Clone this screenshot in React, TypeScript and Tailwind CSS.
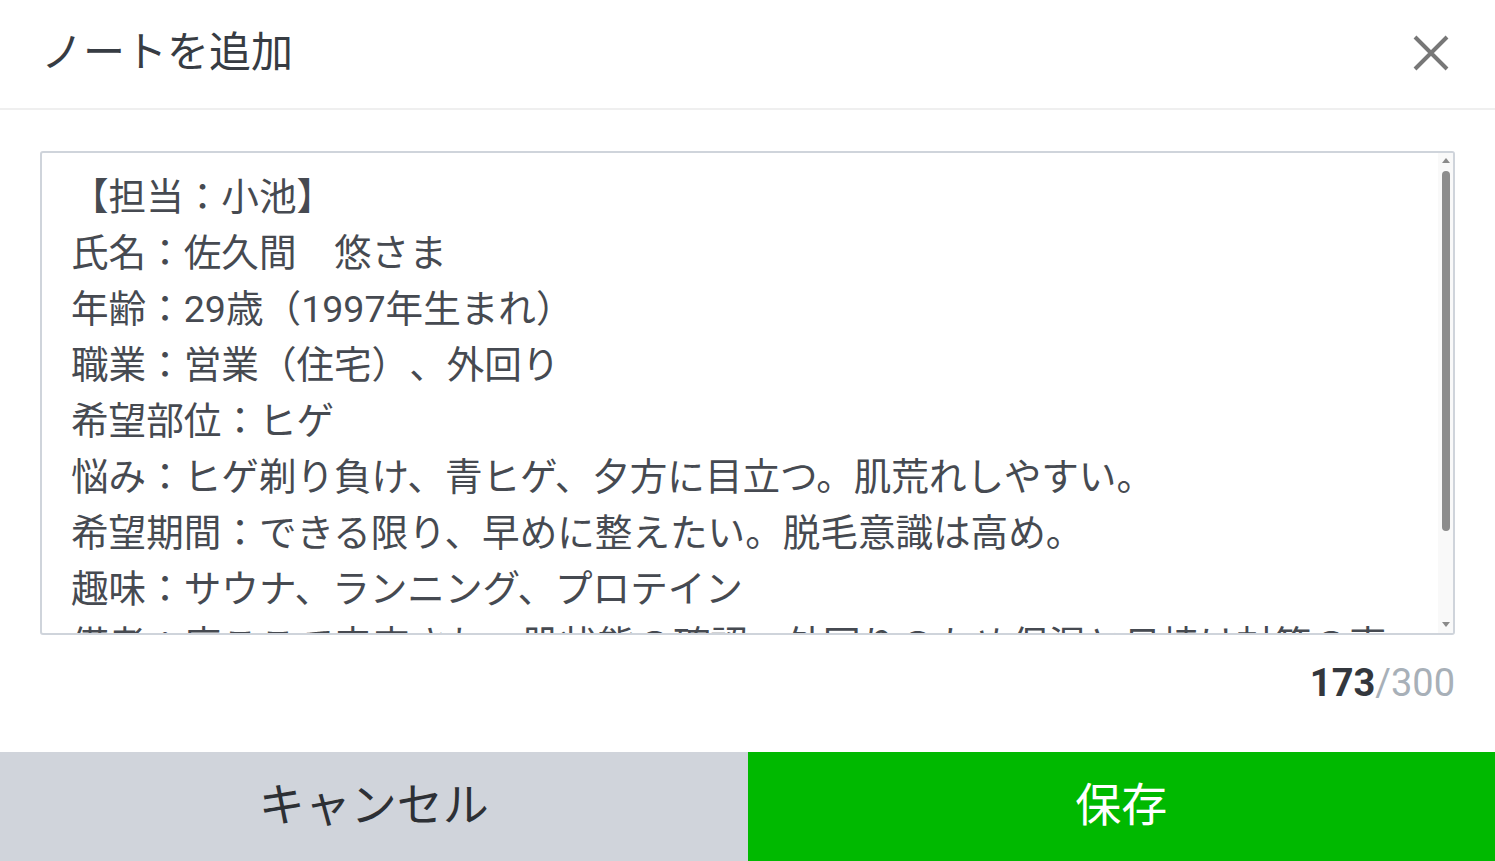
import React from "react";

const FONT = 'Roboto, "Noto Sans CJK JP", "Noto Sans", sans-serif';

const lines = [
  "【担当：小池】",
  "氏名：佐久間　悠さま",
  "年齢：29歳（1997年生まれ）",
  "職業：営業（住宅）、外回り",
  "希望部位：ヒゲ",
  "悩み：ヒゲ剃り負け、青ヒゲ、夕方に目立つ。肌荒れしやすい。",
  "希望期間：できる限り、早めに整えたい。脱毛意識は高め。",
  "趣味：サウナ、ランニング、プロテイン",
  "備考：度ここで来店され、肌状態の確認。外回りのため保湿と日焼け対策の声",
  "がけを行う。",
];

export default function App() {
  return (
    <div
      className="w-full h-[861px] bg-white flex flex-col overflow-hidden [text-spacing-trim:space-all]"
      style={{ fontFamily: FONT }}
    >
      <header className="h-[110px] shrink-0 border-b-2 border-[#efefef] flex items-center justify-between pl-[41px] pr-[46px] pb-[2px]">
        <h1 className="text-[42px] leading-none text-[#373c43]">ノートを追加</h1>
        <svg width="36" height="36" viewBox="0 0 36 36" className="text-[#777777]">
          <path d="M2 2 L34 34 M34 2 L2 34" stroke="currentColor" strokeWidth="4" fill="none" />
        </svg>
      </header>

      <div className="flex-1 flex flex-col px-[40px] pt-[41px]">
        <div className="h-[484px] border-2 border-[#cfd4db] rounded-[3px] flex overflow-hidden">
          <div className="flex-1 overflow-hidden pl-[29px] pt-[16px] text-[37.6px] leading-[56px] text-[#464a51] whitespace-nowrap">
            {lines.map((l, i) => (
              <div key={i}>{l}</div>
            ))}
          </div>
          <div className="w-[15px] shrink-0 bg-[#f9f9f9] flex flex-col items-center pt-[5px] pb-[6px]">
            <div className="w-0 h-0 border-l-[4px] border-r-[4px] border-b-[5px] border-l-transparent border-r-transparent border-b-[#8a8a8a]" />
            <div className="mt-[8px] h-[360px] w-[8px] rounded-full bg-[#8c8c8c]" />
            <div className="flex-1" />
            <div className="w-0 h-0 border-l-[4px] border-r-[4px] border-t-[5px] border-l-transparent border-r-transparent border-t-[#8a8a8a]" />
          </div>
        </div>
        <div className="flex justify-end mt-[26px] text-[38px] leading-[44px]">
          <span className="font-bold text-[#33373d]">173</span>
          <span className="text-[#a8b0b8]">/300</span>
        </div>
      </div>

      <div className="h-[109px] shrink-0 flex">
        <button className="flex-1 bg-[#d0d4db] text-[#2d3035] text-[46px] flex items-center justify-center pb-[2px]">
          キャンセル
        </button>
        <button className="flex-1 bg-[#00b900] text-white text-[46px] flex items-center justify-center pb-[2px]">
          保存
        </button>
      </div>
    </div>
  );
}
